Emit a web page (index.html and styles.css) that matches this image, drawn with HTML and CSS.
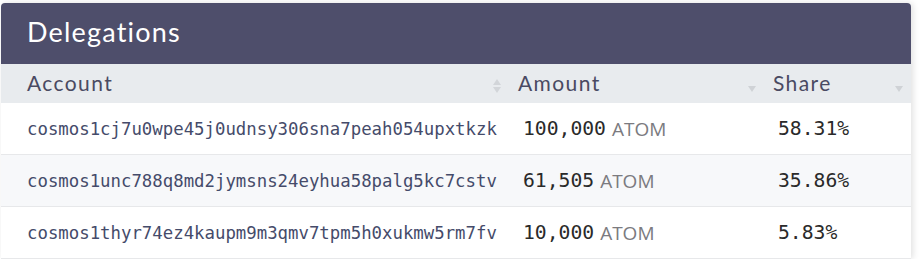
FILE: index.html
```html
<!DOCTYPE html>
<html>
<head>
<meta charset="utf-8">
<link rel="stylesheet" href="styles.css">
</head>
<body>
<div class="card">
  <div class="card-header">Delegations</div>
  <div class="table">
    <div class="th th-first">Account<span class="sort sort-both"></span></div>
    <div class="th">Amount<span class="sort sort-down"></span></div>
    <div class="th">Share<span class="sort sort-down"></span></div>

    <div class="td td-first addr">cosmos1cj7u0wpe45j0udnsy306sna7peah054upxtkzk</div>
    <div class="td num">100,000 <span class="unit">ATOM</span></div>
    <div class="td num share">58.31%</div>

    <div class="td td-first addr alt">cosmos1unc788q8md2jymsns24eyhua58palg5kc7cstv</div>
    <div class="td num alt">61,505 <span class="unit">ATOM</span></div>
    <div class="td num share alt">35.86%</div>

    <div class="td td-first addr">cosmos1thyr74ez4kaupm9m3qmv7tpm5h0xukmw5rm7fv</div>
    <div class="td num">10,000 <span class="unit">ATOM</span></div>
    <div class="td num share">5.83%</div>
  </div>
</div>
</body>
</html>
```
FILE: styles.css
```css
html, body {
  margin: 0;
  padding: 0;
  background: #ffffff;
}
body {
  padding: 3px 9px 0 1px;
}
.card {
  width: 910px;
  background: #ffffff;
  border-radius: 4px 4px 0 0;
  box-shadow: 2px 0 6px rgba(0, 0, 0, 0.12);
  overflow: hidden;
}
.card-header {
  height: 61px;
  background: #4e4e6b;
  color: #ffffff;
  font-family: Lato, "Noto Sans", sans-serif;
  font-size: 27px;
  letter-spacing: 1.2px;
  line-height: 58px;
  padding-left: 26px;
  box-sizing: border-box;
}
.table {
  display: grid;
  grid-template-columns: 508px 255px 147px;
}
.th {
  position: relative;
  height: 39px;
  background: #e8ebee;
  color: #4a4a62;
  font-family: Lato, "Noto Sans", sans-serif;
  font-size: 21px;
  letter-spacing: 1.4px;
  line-height: 38px;
  padding-left: 9px;
}
.th-first {
  padding-left: 26px;
}
.sort {
  position: absolute;
  right: 8px;
  top: 15px;
  width: 8px;
  height: 15px;
}
.sort-both::before,
.sort-both::after,
.sort-down::after {
  content: "";
  position: absolute;
  left: 0;
  border-left: 4px solid transparent;
  border-right: 4px solid transparent;
}
.sort-both::before {
  top: 0;
  border-bottom: 6px solid #d2d5d9;
}
.sort-both::after {
  top: 8px;
  border-top: 6px solid #d2d5d9;
}
.sort-down::after {
  top: 7px;
  border-top: 6px solid #cfd2d6;
}
.td {
  height: 51px;
  border-bottom: 1px solid #e7e8ea;
  display: flex;
  align-items: center;
  padding-left: 14px;
  white-space: nowrap;
}
.td.alt {
  background: #f7f8fa;
}
.td-first {
  padding-left: 26px;
}
.addr {
  font-family: "DejaVu Sans Mono", monospace;
  font-size: 17.35px;
  color: #454b6a;
}
.num {
  font-family: "DejaVu Sans Mono", monospace;
  font-size: 19.7px;
  color: #2a2a2a;
}
.unit {
  font-family: "Open Sans", "Noto Sans", sans-serif;
  font-size: 19px;
  color: #7b7b80;
  margin-left: 6px;
}
```
